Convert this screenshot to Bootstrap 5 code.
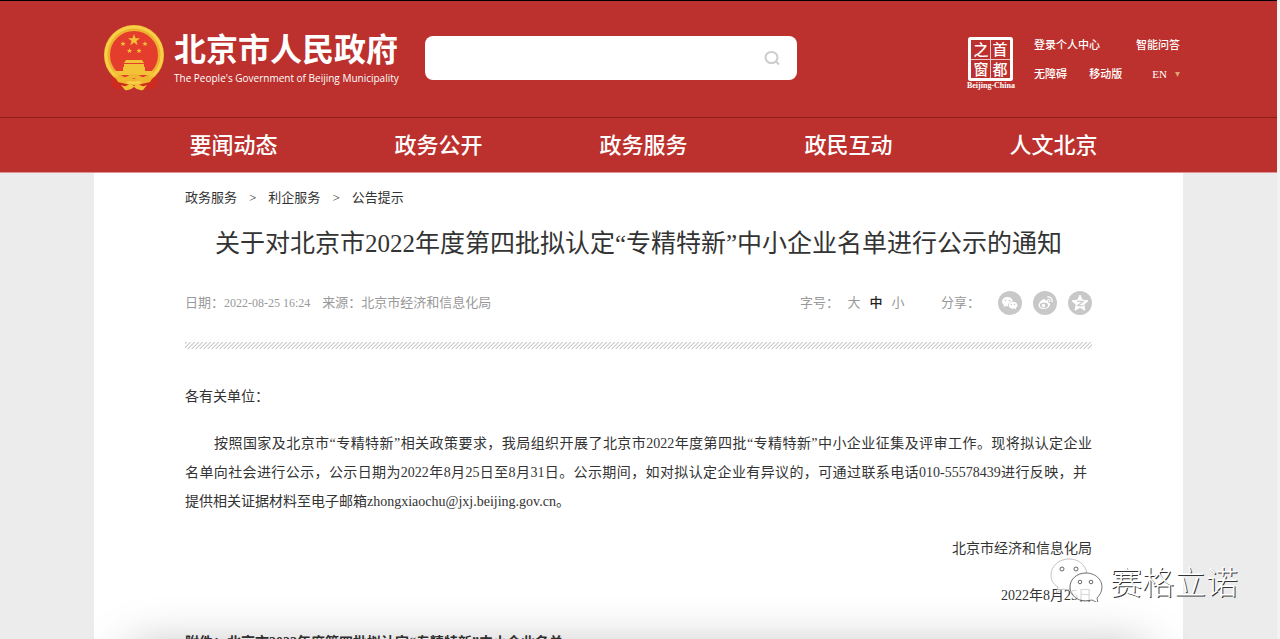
<!DOCTYPE html>
<html lang="zh-CN">
<head>
<meta charset="utf-8">
<meta name="viewport" content="width=device-width, initial-scale=1">
<title>关于对北京市2022年度第四批拟认定“专精特新”中小企业名单进行公示的通知</title>
<link rel="stylesheet" href="https://cdn.jsdelivr.net/npm/bootstrap@5.3.0/dist/css/bootstrap.min.css">
<style>
  body { background: #ececec; color: #333; font-family: "Liberation Serif", "Noto Sans CJK SC", serif; font-size: 14px; border-right: 3px solid #f2f2f2; }
  a { color: inherit; text-decoration: none; }
  .page-shell { max-width: 1089px; }
  .site-head { background: #bc312d; border-top: 1px solid #000; color: #fff; }
  .head-row { min-height: 116px; padding: 24px 3px 0 10px; }
  .brand-link { width: 321px; gap: 8px; }
  .site-name { font: 700 32px/44px "Noto Sans CJK SC", sans-serif; }
  .site-name-en { font: 10px/18px "Open Sans", sans-serif; white-space: nowrap; }
  .search-box { width: 372px; margin-top: 11px; }
  .search-field { height: 44px; border: 0; border-radius: 8px; }
  .search-go { right: 16px; top: 13px; line-height: 0; border: 0; background: none; padding: 0; }
  .head-tools { margin-top: 6px; gap: 18px; }
  .quick-links { font-size: 11px; line-height: 29px; font-weight: 500; width: 146px; }
  .main-nav { border-top: 1px solid #8f1d1c; border-bottom: 1px solid #dc9391; }
  .main-nav ul { padding: 0 27px 0 37px; }
  .main-nav a { font-size: 22px; line-height: 52px; padding-top: 2px; font-weight: 500; display: block; }
  .article-sheet { padding: 0 91px 40px; }
  .crumbs { font-size: 13px; line-height: 20px; padding-top: 15px; }
  .crumbs li + li::before { content: ">"; padding: 0 12px; }
  .article-title { font-size: 25px; line-height: 36px; font-weight: 400; margin: 18px 0 0; }
  .meta-row { font-size: 13px; line-height: 24px; color: #999; margin-top: 29px; }
  .meta-row time { font-size: 12px; }
  .size-btn { border: 0; background: none; padding: 0; color: inherit; width: 22px; }
  .size-btn.chosen { color: #222; font-weight: 500; }
  .share-list { gap: 11px; margin-left: 18px; }
  .hatch { height: 7px; margin-top: 27px; background: linear-gradient(135deg, #fff 12%, #ccc 13% 25%, #fff 38% 62%, #ccc 63% 75%, #fff 88%) 0 0 / 4px 4px; }
  .article-text { line-height: 29px; margin-top: 33px; }
  .article-text p { margin: 0 0 18px; }
  .full-line { display: block; text-align: justify; text-align-last: justify; }
  .first-line { padding-left: 29px; }
  .near-full { padding-right: 5px; }
  .overlay-mark { right: 39px; bottom: 37px; gap: 7px; }
  .overlay-name { font: 300 32px/44px "Noto Sans CJK SC", sans-serif; color: #fff; text-shadow: 1px 1px 0 #333; }
  .foot-shade { left: 130px; right: 130px; top: 100%; height: 40px; box-shadow: 0 8px 48px 0 rgba(0,0,0,.28); }
</style>
</head>
<body>
<div class="vh-100 overflow-hidden position-relative">
<header class="site-head">
  <div class="page-shell mx-auto head-row d-flex align-items-start">
    <a href="#" class="brand-link d-flex flex-shrink-0">
      <svg class="flex-shrink-0" width="62" height="66" viewBox="0 0 62 66" aria-hidden="true">
        <path d="M8 46 L8 62 Q17 66 23 63 L31 61 L38 63 Q45 66 53 62 L53 46Z" fill="#cf2a20"/>
        <circle cx="30" cy="30" r="27" fill="#e43d2e" stroke="#eeb02f" stroke-width="6"/>
        <circle cx="30" cy="30" r="28" fill="none" stroke="#f8d048" stroke-width="3"/>
        <g fill="#f3c236">
          <path id="star" d="M30 9l1.500 4.200H36l-3.600 2.700 1.300 4.300L30 17.600l-3.700 2.600 1.300-4.300-3.600-2.700h4.500z"/>
          <use href="#star" transform="translate(5.500 12) scale(.45)"/>
          <use href="#star" transform="translate(27.500 12) scale(.45)"/>
          <use href="#star" transform="translate(12 19) scale(.45)"/>
          <use href="#star" transform="translate(21.500 19) scale(.45)"/>
          <path d="M22 35h16l2 3H20zM20 39h20v3h-20zM19 42h22v4H19zM11 46h38v4H11z"/>
        </g>
        <path d="M10 50q8 5 14 1l3-2h6l3 2q6 4 14-1l-4 7q-8 3-12-2l-4-2-4 2q-4 5-12 2z" fill="#f0b62f"/>
        <path d="M17 60q6 3 9-2l4 3 4-3q3 5 9 2l-4 5q-5 1-9-3-4 4-9 3z" fill="#f3c236"/>
      </svg>
      <span>
        <span class="site-name d-block">北京市人民政府</span>
        <span class="site-name-en d-block">The People's Government of Beijing Municipality</span>
      </span>
    </a>
    <form class="search-box position-relative">
      <input type="search" class="search-field form-control" aria-label="搜索">
      <button type="button" class="search-go position-absolute" aria-label="搜索">
        <svg width="18" height="18" viewBox="0 0 18 18" fill="none" stroke="#ccc" stroke-width="2"><ellipse cx="8.500" cy="8.500" rx="6" ry="5.500"/><path d="M13 12.500l3 3"/></svg>
      </button>
    </form>
    <div class="head-tools d-flex ms-auto">
      <a href="#" aria-label="首都之窗">
        <svg class="d-block" width="50" height="60" viewBox="0 0 50 60" fill="#fff">
          <rect x="3.500" y="7.500" width="42" height="41" rx="1" fill="none" stroke="#fff" stroke-width="3"/>
          <path d="M24.500 9v39M5 28.500h39" stroke="#fff" stroke-width="1" opacity=".75"/>
          <g font-family="Noto Sans CJK SC, sans-serif" font-size="15" font-weight="500" text-anchor="middle"><text x="15" y="24">之</text><text x="34" y="24">首</text><text x="15" y="44">窗</text><text x="34" y="44">都</text></g>
          <text x="25" y="57" font-family="Liberation Serif, serif" font-weight="700" font-size="8" text-anchor="middle">Beijing-China</text>
        </svg>
      </a>
      <div class="quick-links">
        <div class="d-flex justify-content-between"><a href="#">登录个人中心</a><a href="#">智能问答</a></div>
        <div class="d-flex justify-content-between"><a href="#">无障碍</a><a href="#">移动版</a>
          <a href="#" class="d-flex align-items-center gap-2 ps-2">EN <svg width="5" height="5" viewBox="0 0 5 5" aria-hidden="true"><path d="M0 0h5L2.500 5z" fill="#dca46a"/></svg></a></div>
      </div>
    </div>
  </div>
  <nav class="main-nav">
    <ul class="page-shell mx-auto list-unstyled mb-0 d-flex text-center">
      <li class="col"><a href="#">要闻动态</a></li>
      <li class="col"><a href="#">政务公开</a></li>
      <li class="col"><a href="#">政务服务</a></li>
      <li class="col"><a href="#">政民互动</a></li>
      <li class="col"><a href="#">人文北京</a></li>
    </ul>
  </nav>
</header>
<main class="page-shell mx-auto bg-white article-sheet">
  <nav aria-label="当前位置">
    <ol class="crumbs list-unstyled d-flex mb-0"><li><a href="#">政务服务</a></li><li><a href="#">利企服务</a></li><li><a href="#">公告提示</a></li></ol>
  </nav>
  <h1 class="article-title text-center">关于对北京市2022年度第四批拟认定“专精特新”中小企业名单进行公示的通知</h1>
  <div class="meta-row d-flex align-items-center">
    <span>日期：<time>2022-08-25 16:24</time></span>
    <span class="ms-2 ps-1">来源：北京市经济和信息化局</span>
    <div class="ms-auto d-flex align-items-center">
      <span class="me-1">字号：</span>
      <button type="button" class="size-btn">大</button>
      <button type="button" class="size-btn chosen">中</button>
      <button type="button" class="size-btn">小</button>
      <span class="ms-4 ps-2">分享：</span>
      <div class="share-list d-flex">
        <a href="#" aria-label="微信"><svg class="d-block" width="24" height="24" viewBox="0 0 24 24"><circle cx="12" cy="12" r="12" fill="#c8c8c8"/><g fill="#fff"><path d="M9.500 6C6.500 6 4 8 4 10.600c0 1.500.8 2.700 2 3.600L5.600 16l2-1c1 .3 1.500.3 2.400.3 0-3.300 2.500-5 5-5C14.500 7.500 12.200 6 9.500 6z"/><path d="M15 10.800c-2.400 0-4.400 1.600-4.400 3.500s2 3.500 4.400 3.500l1.400-.2 1.800.9-.5-1.500c1-.6 1.800-1.600 1.800-2.700 0-1.900-2-3.500-4.500-3.500z"/></g><g fill="#c8c8c8"><circle cx="7.500" cy="9.500" r=".8"/><circle cx="11.500" cy="9.500" r=".8"/><circle cx="13.500" cy="13.500" r=".7"/><circle cx="16.500" cy="13.500" r=".7"/></g></svg></a>
        <a href="#" aria-label="微博"><svg class="d-block" width="24" height="24" viewBox="0 0 24 24"><circle cx="12" cy="12" r="12" fill="#c8c8c8"/><path d="M9 9c2-1.500 3.500-1.200 3.200.7 2-.8 3.600-.3 3 1.500 1.500.5 2.300 1.500 1.800 3-.8 2.300-3.500 3.800-6.500 3.800-2.800 0-5-1.400-5-3.700C5.500 12.500 7 10.500 9 9z" fill="#fff"/><ellipse cx="11" cy="14.300" rx="4" ry="2.700" fill="#c8c8c8"/><circle cx="10.500" cy="14.500" r="1.700" fill="#fff"/><path d="M14.500 8.300c1.500-.3 2.700.8 2.300 2.500M14.200 6c3.300-.5 5.600 2 4.800 5.200" fill="none" stroke="#fff" stroke-width="1.200"/></svg></a>
        <a href="#" aria-label="QQ空间"><svg class="d-block" width="24" height="24" viewBox="0 0 24 24"><circle cx="12" cy="12" r="12" fill="#c8c8c8"/><path d="M12 4l2.300 5.100 5.700.7-4.200 3.800 1.100 5.600-4.900-2.800-4.900 2.800 1.100-5.600L4 9.800l5.700-.7z" fill="#fff" stroke="#fff" stroke-linejoin="round"/><path d="M9 10.500q3-.6 6 0L9.800 14.500q2.500.6 5.600 0" fill="none" stroke="#c8c8c8" stroke-width="1.200"/></svg></a>
      </div>
    </div>
  </div>
  <div class="hatch"></div>
  <div class="article-text">
    <p>各有关单位：</p>
    <p><span class="full-line first-line">按照国家及北京市“专精特新”相关政策要求，我局组织开展了北京市2022年度第四批“专精特新”中小企业征集及评审工作。现将拟认定企业</span><span class="full-line near-full">名单向社会进行公示，公示日期为2022年8月25日至8月31日。公示期间，如对拟认定企业有异议的，可通过联系电话010-55578439进行反映，并</span>提供相关证据材料至电子邮箱zhongxiaochu@jxj.beijing.gov.cn。</p>
    <p class="text-end">北京市经济和信息化局</p>
    <p class="text-end">2022年8月25日</p>
    <p><strong>附件：北京市2022年度第四批拟认定“专精特新”中小企业名单</strong></p>
  </div>
</main>
<div class="foot-shade position-absolute"></div>
<div class="overlay-mark position-absolute d-flex align-items-center">
  <svg width="53" height="44" viewBox="0 0 53 44" aria-hidden="true">
    <path d="M19 1C9 1 1 8 1 17c0 5 2 9 7 12l-2 6 7-4 7 1c-1-10 6-17 17-17C35 6 28 1 19 1z" fill="#fff" fill-opacity=".6" stroke="#aaa" stroke-width=".7"/>
    <path d="M36 15c-9 0-16 6-16 14s7 14 16 14l6-1 6 3-1-5c3-3 5-7 5-11 0-8-7-14-16-14z" fill="#fff" fill-opacity=".8" stroke="#555" stroke-width=".8"/>
    <g fill="#fff" stroke="#666" stroke-width="1"><circle cx="12" cy="11" r="2"/><circle cx="26" cy="11" r="2"/><circle cx="30" cy="24" r="1.800"/><circle cx="41" cy="24" r="1.800"/></g>
  </svg>
  <span class="overlay-name">赛格立诺</span>
</div>
</div>
<script src="https://cdn.jsdelivr.net/npm/bootstrap@5.3.0/dist/js/bootstrap.bundle.min.js"></script>
</body>
</html>
